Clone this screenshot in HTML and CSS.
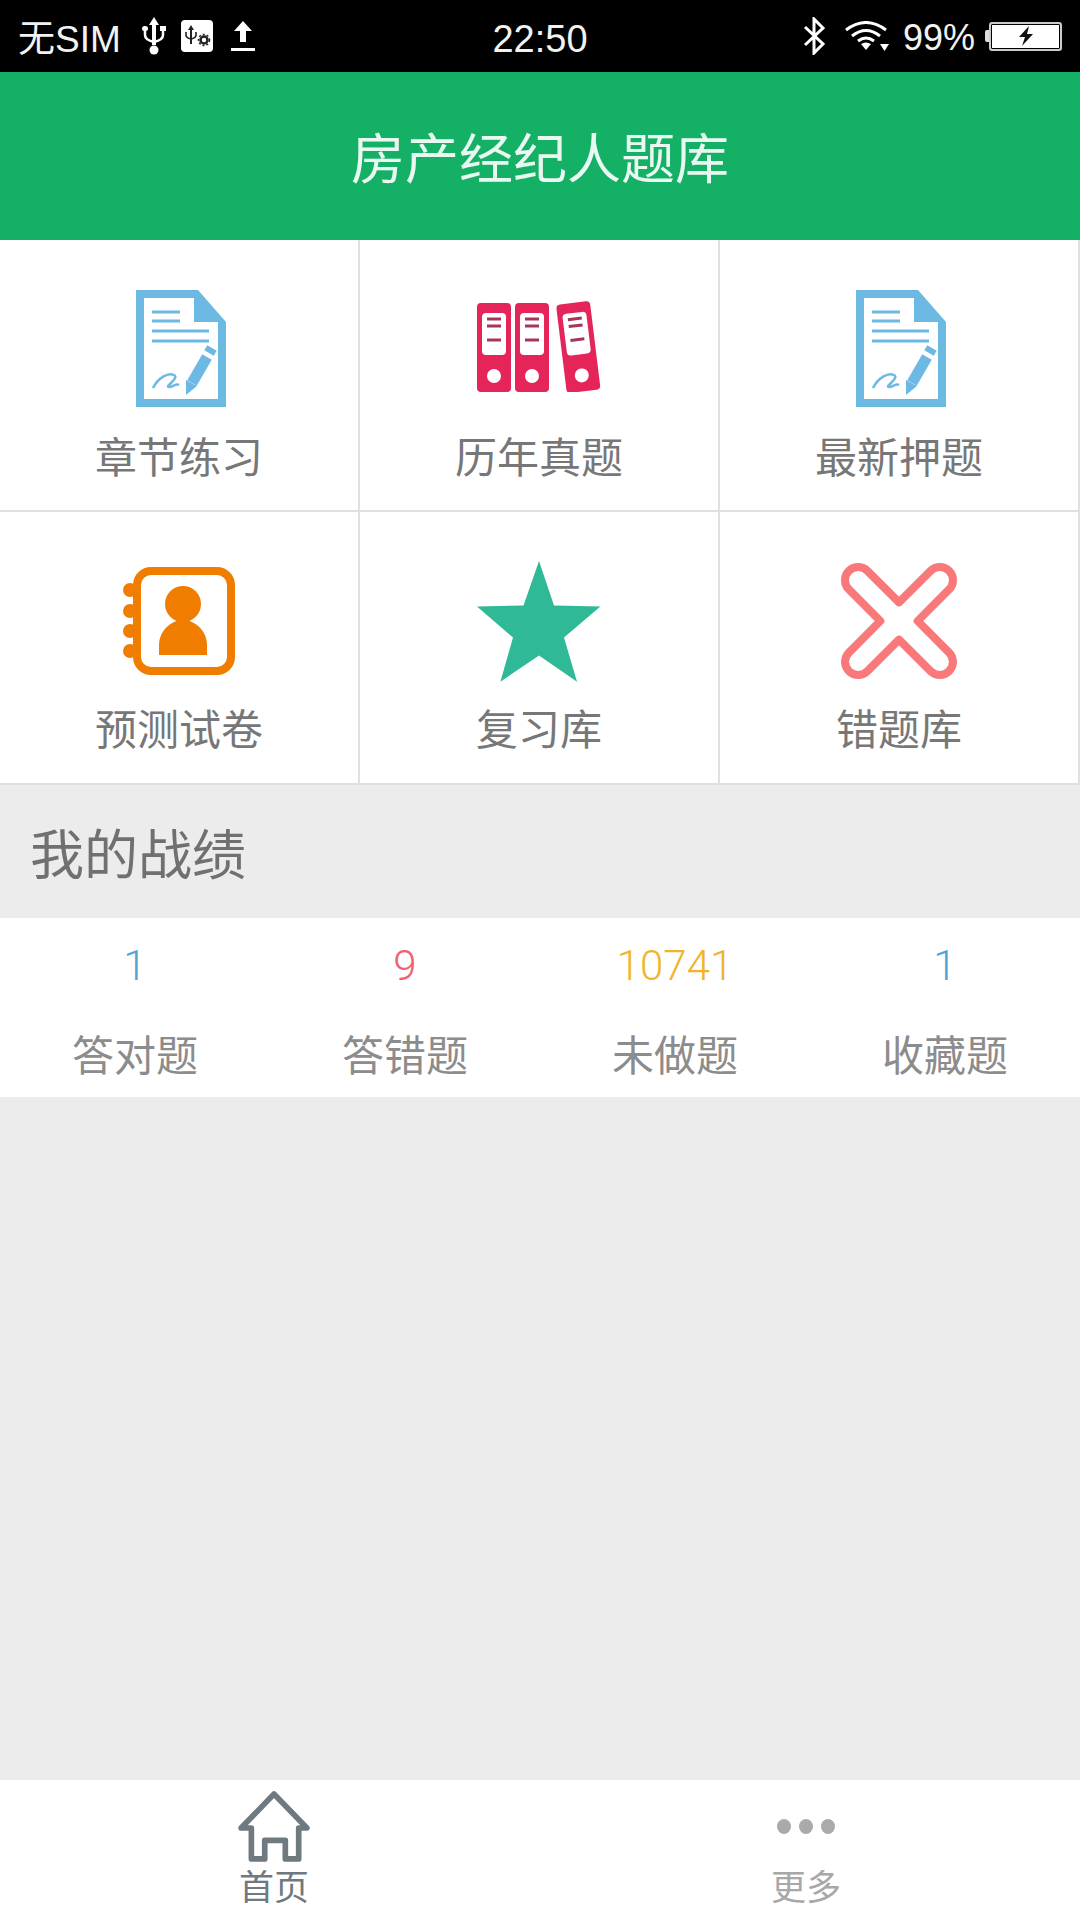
FILE: index.html
```html
<!DOCTYPE html>
<html lang="zh-CN">
<head>
    <meta charset="UTF-8">
    <meta name="viewport" content="width=device-width, initial-scale=1.0">
    <title>房产经纪人题库</title>
    <link rel="stylesheet" href="styles.css">
</head>
<body>
    <div class="status-bar">
        <div class="status-left">
            <span class="sim-text">无SIM</span>
            <svg class="icon-usb" viewBox="0 0 24 38"><path d="M12 0 L17 8 H14 V28 H10 V8 H7 Z" fill="#fff"/><circle cx="12" cy="33" r="4.5" fill="#fff"/><path d="M3 12 V18 Q3 23 12 25 Q21 23 21 18 V12" fill="none" stroke="#fff" stroke-width="2.5"/><rect x="0" y="9" width="6" height="5" rx="2.5" fill="#fff"/><rect x="18" y="9" width="6" height="5" fill="#fff"/></svg>
            <svg class="icon-debug" viewBox="0 0 32 32"><rect width="32" height="32" rx="4" fill="#fff"/><path d="M10 5 L13 10 H11 V24 H9 V10 H7 Z" fill="#222"/><path d="M5 12 V15 Q5 18 10 19 Q15 18 15 15 V12" fill="none" stroke="#222" stroke-width="1.6"/><circle cx="23" cy="20" r="3.5" fill="none" stroke="#222" stroke-width="2.5"/><circle cx="23" cy="20" r="5.5" fill="none" stroke="#222" stroke-width="1.5" stroke-dasharray="2 2"/></svg>
            <svg class="icon-upload" viewBox="0 0 24 30"><path d="M12 0 L21 10 H15 V21 H9 V10 H3 Z" fill="#fff"/><rect y="27" width="24" height="3" fill="#fff"/></svg>
        </div>
        <div class="status-time">22:50</div>
        <div class="status-right">
            <svg class="icon-bt" viewBox="0 0 22 38"><path d="M2 10 L20 27 L11 36 V2 L20 11 L2 28" fill="none" stroke="#fff" stroke-width="3"/></svg>
            <svg class="icon-wifi" viewBox="0 0 44 30"><path d="M1 9 Q21 -6 41 9" fill="none" stroke="#fff" stroke-width="3"/><path d="M7 15 Q21 4 35 15" fill="none" stroke="#fff" stroke-width="3"/><path d="M13 20 Q21 14 29 20" fill="none" stroke="#fff" stroke-width="3"/><path d="M16 23 Q21 20 26 23 L21 29 Z" fill="#fff"/><path d="M35 23 H44 L39.5 30 Z" fill="#fff"/></svg>
            <span class="battery-text">99%</span>
            <div class="battery">
                <div class="battery-nub"></div>
                <div class="battery-body">
                    <svg class="icon-bolt" viewBox="0 0 18 20"><path d="M12 0 L2 11 H8 L5 20 L16 8 H10 Z" fill="#111"/></svg>
                </div>
            </div>
        </div>
    </div>

    <div class="app-header">房产经纪人题库</div>

    <div class="menu-grid">
        <div class="menu-cell">
            <div class="menu-icon">
                <svg class="ic-doc" viewBox="0 0 90 117">
                    <path fill-rule="evenodd" d="M0 0 H62 L90 32 V117 H0 Z M8 8 V109 H82 V32 H58 V8 Z" fill="#6cb9e4"/>
                    <path d="M16 22 H44 M16 31 H44 M16 41 H73 M16 51 H73" stroke="#6cb9e4" stroke-width="3" fill="none"/>
                    <path d="M56 93 L71 67" stroke="#6cb9e4" stroke-width="11" fill="none"/>
                    <path d="M50 105 L50 90 L61 96 Z" fill="#6cb9e4"/>
                    <path d="M73 63 L76 58" stroke="#6cb9e4" stroke-width="11" fill="none"/>
                    <path d="M17 98 C22 88 32 82 38 85 C44 88 28 97 33 97 C37 97 40 93 43 95" stroke="#6cb9e4" stroke-width="2.5" fill="none"/>
                </svg>
            </div>
            <div class="menu-label">章节练习</div>
        </div>
        <div class="menu-cell">
            <div class="menu-icon">
                <svg class="ic-binder" viewBox="0 0 125 92">
                    <defs>
                        <g id="binder">
                            <rect width="34" height="89" rx="4" fill="#e5245a"/>
                            <rect x="5" y="10" width="24" height="42" rx="4" fill="#fff"/>
                            <path d="M10 16 H24 M10 23 H24 M10 37 H24" stroke="#a8345a" stroke-width="3" fill="none"/>
                            <circle cx="17" cy="73" r="7" fill="#fff"/>
                        </g>
                    </defs>
                    <use href="#binder" x="0" y="3"/>
                    <use href="#binder" x="38" y="3"/>
                    <use href="#binder" transform="translate(79 5) rotate(-7)"/>
                </svg>
            </div>
            <div class="menu-label">历年真题</div>
        </div>
        <div class="menu-cell">
            <div class="menu-icon">
                <svg class="ic-doc" viewBox="0 0 90 117">
                    <path fill-rule="evenodd" d="M0 0 H62 L90 32 V117 H0 Z M8 8 V109 H82 V32 H58 V8 Z" fill="#6cb9e4"/>
                    <path d="M16 22 H44 M16 31 H44 M16 41 H73 M16 51 H73" stroke="#6cb9e4" stroke-width="3" fill="none"/>
                    <path d="M56 93 L71 67" stroke="#6cb9e4" stroke-width="11" fill="none"/>
                    <path d="M50 105 L50 90 L61 96 Z" fill="#6cb9e4"/>
                    <path d="M73 63 L76 58" stroke="#6cb9e4" stroke-width="11" fill="none"/>
                    <path d="M17 98 C22 88 32 82 38 85 C44 88 28 97 33 97 C37 97 40 93 43 95" stroke="#6cb9e4" stroke-width="2.5" fill="none"/>
                </svg>
            </div>
            <div class="menu-label">最新押题</div>
        </div>
        <div class="menu-cell">
            <div class="menu-icon">
                <svg class="ic-contact" viewBox="0 0 112 108">
                    <circle cx="7" cy="23" r="7" fill="#f07d00"/>
                    <circle cx="7" cy="44" r="7" fill="#f07d00"/>
                    <circle cx="7" cy="64" r="7" fill="#f07d00"/>
                    <circle cx="7" cy="84" r="7" fill="#f07d00"/>
                    <rect x="14" y="4" width="94" height="100" rx="14" fill="#fff" stroke="#f07d00" stroke-width="8"/>
                    <circle cx="60" cy="37" r="18" fill="#f07d00"/>
                    <path d="M36 88 V78 C36 64 48 53 60 53 C72 53 84 64 84 78 V88 Z" fill="#f07d00"/>
                </svg>
            </div>
            <div class="menu-label">预测试卷</div>
        </div>
        <div class="menu-cell">
            <div class="menu-icon">
                <svg class="ic-star" viewBox="0 0 124 121">
                    <path d="M62 0 L77 44.5 L123.4 45.5 L87 76.5 L100 120.7 L62 94.5 L23.4 120.7 L36 76.5 L0 45.5 L46.5 44.5 Z" fill="#2fb996"/>
                </svg>
            </div>
            <div class="menu-label">复习库</div>
        </div>
        <div class="menu-cell">
            <div class="menu-icon">
                <svg class="ic-cross" viewBox="0 0 117 117">
                    <path d="M58.5 40 L89.8 8.8 A13 13 0 0 1 108.2 27.2 L77 58.5 L108.2 89.8 A13 13 0 0 1 89.8 108.2 L58.5 77 L27.2 108.2 A13 13 0 0 1 8.8 89.8 L40 58.5 L8.8 27.2 A13 13 0 0 1 27.2 8.8 Z" fill="#fff" stroke="#f9797b" stroke-width="8" stroke-linejoin="round"/>
                </svg>
            </div>
            <div class="menu-label">错题库</div>
        </div>
    </div>

    <div class="section-title">我的战绩</div>

    <div class="stats-row">
        <div class="stat"><div class="stat-num num-blue">1</div><div class="stat-label">答对题</div></div>
        <div class="stat"><div class="stat-num num-red">9</div><div class="stat-label">答错题</div></div>
        <div class="stat"><div class="stat-num num-yellow">10741</div><div class="stat-label">未做题</div></div>
        <div class="stat"><div class="stat-num num-blue">1</div><div class="stat-label">收藏题</div></div>
    </div>

    <div class="spacer"></div>

    <div class="tab-bar">
        <div class="tab">
            <div class="tab-icon">
                <svg class="ic-home" viewBox="0 0 70 70"><path d="M3 36 L35 3 L67 36 H59 V66 H46 V48 H26 V66 H13 V36 Z" fill="none" stroke="#6f7a80" stroke-width="5.5" stroke-linejoin="round"/></svg>
            </div>
            <div class="tab-label">首页</div>
        </div>
        <div class="tab tab-off">
            <div class="tab-icon">
                <div class="dots"><span></span><span></span><span></span></div>
            </div>
            <div class="tab-label">更多</div>
        </div>
    </div>
</body>
</html>
```

FILE: styles.css
```css
* {
    box-sizing: border-box;
}
html, body {
    margin: 0;
    padding: 0;
}
body {
    width: 1080px;
    height: 1920px;
    display: flex;
    flex-direction: column;
    background-color: #ececec;
    font-family: "Liberation Sans", "Noto Sans CJK SC", sans-serif;
    overflow: hidden;
}

/* status bar */
.status-bar {
    height: 72px;
    background-color: #000;
    color: #f2f2f2;
    display: grid;
    grid-template-columns: 1fr auto 1fr;
    align-items: center;
    padding: 0 18px;
}
.status-left, .status-right {
    display: flex;
    align-items: center;
}
.status-right {
    justify-content: flex-end;
}
.sim-text {
    font-size: 37px;
    width: 124px;
}
.status-time {
    font-size: 38px;
    padding-top: 6px;
}
.icon-usb { width: 24px; height: 38px; }
.icon-debug { width: 32px; height: 32px; margin-left: 15px; }
.icon-upload { width: 24px; height: 30px; margin-left: 18px; }
.icon-bt { width: 22px; height: 38px; }
.icon-wifi { width: 44px; height: 30px; margin-left: 20px; }
.battery-text { font-size: 36px; margin-left: 14px; padding-top: 4px; }
.battery {
    display: flex;
    align-items: center;
    margin-left: 10px;
}
.battery-nub {
    width: 4px;
    height: 12px;
    background-color: #ddd;
    border-radius: 2px 0 0 2px;
}
.battery-body {
    width: 73px;
    height: 29px;
    background-color: #fff;
    border: 2px solid #ccc;
    box-shadow: inset 0 0 0 1px #000;
    border-radius: 3px;
    display: flex;
    align-items: center;
    justify-content: center;
}
.icon-bolt { width: 18px; height: 20px; }

/* header */
.app-header {
    height: 168px;
    background-color: #14b066;
    color: #e9f8f0;
    font-size: 54px;
    line-height: 176px;
    text-align: center;
}

/* menu grid */
.menu-grid {
    display: grid;
    grid-template-columns: repeat(3, 1fr);
    grid-template-rows: 272px 273px;
    background-color: #fff;
}
.menu-cell {
    border-right: 2px solid #e0e0e0;
    border-bottom: 2px solid #e0e0e0;
    display: flex;
    flex-direction: column;
    align-items: center;
}
.menu-icon {
    height: 176px;
    padding-top: 40px;
    display: flex;
    align-items: flex-start;
    justify-content: center;
}
.ic-doc { width: 90px; height: 117px; margin: 10px 0 0 4px; }
.ic-binder { width: 125px; height: 92px; margin: 20px 0 0 1px; }
.ic-contact { width: 112px; height: 108px; margin-top: 15px; }
.ic-star { width: 124px; height: 121px; margin-top: 9px; }
.ic-cross { width: 118px; height: 118px; margin-top: 10px; }
.menu-label {
    font-size: 42px;
    line-height: 82px;
    margin-top: 2px;
    color: #777;
}

/* section */
.section-title {
    height: 133px;
    padding-left: 30px;
    font-size: 54px;
    line-height: 142px;
    color: #707070;
}

/* stats */
.stats-row {
    height: 179px;
    background-color: #fff;
    display: grid;
    grid-template-columns: repeat(4, 1fr);
}
.stat {
    text-align: center;
}
.stat-num {
    font-family: Roboto, "Liberation Sans", sans-serif;
    font-weight: 300;
    font-size: 42px;
    line-height: 48px;
    margin-top: 24px;
}
.stat-label {
    font-size: 42px;
    line-height: 60px;
    margin-top: 37px;
    color: #8c8c8c;
}
.num-blue { color: #4ea5d8; }
.num-red { color: #f0606e; }
.num-yellow { color: #f0b429; }

.spacer {
    flex: 1;
}

/* tab bar */
.tab-bar {
    height: 140px;
    background-color: #fff;
    display: grid;
    grid-template-columns: 1fr 1fr;
    padding: 0 8px;
}
.tab {
    display: flex;
    flex-direction: column;
    align-items: center;
}
.tab-icon {
    height: 84px;
    padding-top: 11px;
    display: flex;
    align-items: flex-start;
}
.ic-home { width: 72px; height: 72px; }
.dots {
    display: flex;
    gap: 8px;
    margin-top: 28px;
}
.dots span {
    width: 14px;
    height: 15px;
    border-radius: 50%;
    background-color: #aaa;
}
.tab-label {
    font-size: 35px;
    line-height: 48px;
    color: #6f7a80;
}
.tab-off .tab-label {
    color: #a8a8a8;
}
```
